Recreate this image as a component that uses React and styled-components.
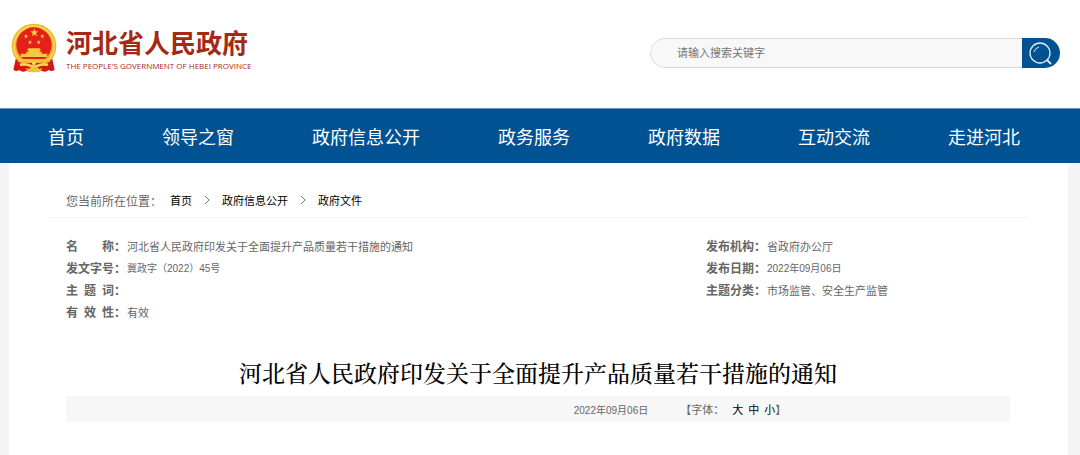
import React, { useState } from "react";
import styled, { createGlobalStyle } from "styled-components";

const NAV_ITEMS = [
  "首页",
  "领导之窗",
  "政府信息公开",
  "政务服务",
  "政府数据",
  "互动交流",
  "走进河北",
];

const CRUMBS = ["首页", "政府信息公开", "政府文件"];

const TITLE = "河北省人民政府印发关于全面提升产品质量若干措施的通知";

const INFO_LEFT = [
  { label: ["名", "称"], value: TITLE },
  { label: ["发", "文", "字", "号"], value: "冀政字（2022）45号", numeric: true },
  { label: ["主", "题", "词"], value: "" },
  { label: ["有", "效", "性"], value: "有效" },
];

const INFO_RIGHT = [
  { label: ["发", "布", "机", "构"], value: "省政府办公厅" },
  { label: ["发", "布", "日", "期"], value: "2022年09月06日", numeric: true },
  { label: ["主", "题", "分", "类"], value: "市场监管、安全生产监管" },
];

const STAR = "M0-10 2.4-3.2 9.5-3.1 3.8 1.2 5.9 8.1 0 4-5.9 8.1-3.8 1.2-9.5-3.1-2.4-3.2Z";

const Emblem = () => (
  <EmblemSvg viewBox="14 18 138 150" aria-hidden="true">
    <circle cx="83" cy="87" r="67" fill="#edb52c" />
    <circle cx="83" cy="87" r="60" fill="none" stroke="#f9d252" strokeWidth="6" />
    <circle cx="83" cy="84" r="53" fill="#e5201b" />
    <path d="M28 126q55 24 110 0l7 32q-8 8-18 1-8 8-20 3H59q-12 5-20-3-10 7-18-1Z" fill="#cf1a16" />
    <g fill="#f6c945">
      <path d={STAR} transform="translate(84 47) scale(1.3)" />
      <path d={STAR} transform="translate(59 58) scale(.7)" />
      <path d={STAR} transform="translate(108 58) scale(.7)" />
      <path d={STAR} transform="translate(71 76) scale(.7)" />
      <path d={STAR} transform="translate(97 76) scale(.7)" />
      <path d="M66 94h34l4 6h-4v4h6v6h17v10H43v-10h17v-6h6v-4h-4Z" />
    </g>
    <path d="M26 118q14 12 28 8h58q14 4 28-8l-10 16q-12 6-22 3H58q-10 3-22-3Z" fill="#f2c03a" />
    <path d="M44 143q18-3 27 3t24 0q9-6 27-3" fill="none" stroke="#f9d458" strokeWidth="8" strokeLinecap="round" />
    <path d="M66 156q17-14 34 0l8-3q-5 13-13 13H71q-8 0-13-13Z" fill="#f2c03a" />
    <circle cx="83" cy="139" r="6" fill="#f9d458" />
  </EmblemSvg>
);

const SearchIcon = () => (
  <svg width="24" height="24" viewBox="0 0 24 24" fill="none" stroke="#e4edf5" aria-hidden="true">
    <circle cx="11" cy="12" r="10" strokeWidth="1.3" />
    <path d="M5 11q1-4 5-5" strokeWidth="1" />
    <path d="m18 19 4 4" strokeWidth="1.8" />
  </svg>
);

const Chevron = () => (
  <svg width="6" height="10" viewBox="0 0 6 10" fill="none" stroke="#777" aria-hidden="true">
    <path d="m1 1 4 4-4 4" />
  </svg>
);

const InfoItem = ({ item }) => (
  <InfoRow>
    <InfoLabel>
      <LabelChars>
        {item.label.map((char) => (
          <span key={char}>{char}</span>
        ))}
      </LabelChars>
      ：
    </InfoLabel>
    <InfoValue $numeric={item.numeric}>{item.value}</InfoValue>
  </InfoRow>
);

const App = () => {
  const [keyword, setKeyword] = useState("");

  const onChangeKeyword = (e) => {
    setKeyword(e.target.value);
  };

  return (
    <>
      <GlobalStyle />
      <Header>
        <Logo href="#">
          <Emblem />
          <LogoText>
            <LogoName>河北省人民政府</LogoName>
            <LogoEnglish>THE PEOPLE'S GOVERNMENT OF HEBEI PROVINCE</LogoEnglish>
          </LogoText>
        </Logo>
        <SearchForm onSubmit={(e) => e.preventDefault()}>
          <SearchInput
            value={keyword}
            onChange={onChangeKeyword}
            type="text"
            aria-label="请输入搜索关键字"
            placeholder="请输入搜索关键字"
          />
          <SearchButton type="submit" aria-label="搜索">
            <SearchIcon />
          </SearchButton>
        </SearchForm>
      </Header>
      <Nav>
        {NAV_ITEMS.map((item) => (
          <NavLink key={item} href="#">
            {item}
          </NavLink>
        ))}
      </Nav>
      <Panel>
        <Breadcrumb>
          <CrumbLabel>您当前所在位置：</CrumbLabel>
          {CRUMBS.map((crumb, index) => (
            <React.Fragment key={crumb}>
              {index > 0 && <Chevron />}
              <CrumbLink href="#">{crumb}</CrumbLink>
            </React.Fragment>
          ))}
        </Breadcrumb>
        <Article>
          <InfoGrid>
            <InfoList>
              {INFO_LEFT.map((item) => (
                <InfoItem key={item.label.join("")} item={item} />
              ))}
            </InfoList>
            <InfoList>
              {INFO_RIGHT.map((item) => (
                <InfoItem key={item.label.join("")} item={item} />
              ))}
            </InfoList>
          </InfoGrid>
          <Title>{TITLE}</Title>
          <MetaBar>
            <MetaDate>2022年09月06日</MetaDate>
            <FontSizes>
              【字体：
              <SizeButtons>
                <SizeButton type="button">大</SizeButton>
                <SizeButton type="button">中</SizeButton>
                <SizeButton type="button">小</SizeButton>
              </SizeButtons>
              】
            </FontSizes>
          </MetaBar>
        </Article>
      </Panel>
    </>
  );
};

export default App;

const GlobalStyle = createGlobalStyle`
  * {
    box-sizing: border-box;
  }
  html, body, #root {
    height: 100%;
  }
  body {
    margin: 0;
    background: #f4f4f4;
    color: #666;
    font-family: "Liberation Sans", "Noto Sans CJK SC", sans-serif;
    font-size: 11px;
  }
  #root {
    display: flex;
    flex-direction: column;
  }
  a {
    color: inherit;
    text-decoration: none;
  }
`;

const Header = styled.header`
  display: flex;
  justify-content: space-between;
  align-items: flex-start;
  height: 108px;
  padding: 22px 20px 0 11px;
  flex-shrink: 0;
  background: #fff;
`;
const Logo = styled.a`
  display: flex;
  align-items: center;
  gap: 9px;
  color: #a52a14;
`;
const EmblemSvg = styled.svg`
  width: 46px;
  height: 50px;
`;
const LogoText = styled.span`
  display: flex;
  flex-direction: column;
  padding-top: 4px;
`;
const LogoName = styled.span`
  font-family: "Noto Sans CJK SC", sans-serif;
  font-size: 26px;
  font-weight: 700;
  line-height: 32px;
`;
const LogoEnglish = styled.span`
  font-family: "Open Sans", sans-serif;
  font-size: 8px;
  font-weight: 500;
  line-height: 16px;
  white-space: nowrap;
`;
const SearchForm = styled.form`
  display: flex;
  flex: 0 1 410px;
  height: 30px;
  margin-top: 16px;
  border-radius: 15px;
  overflow: hidden;
`;
const SearchInput = styled.input`
  flex: 1;
  min-width: 0;
  padding: 0 26px;
  border: 1px solid #d9d9d9;
  border-right: none;
  border-radius: 15px 0 0 15px;
  background: #f8f8f8;
  font: inherit;
  color: #666;
  &::placeholder {
    color: #757575;
  }
`;
const SearchButton = styled.button`
  display: flex;
  justify-content: center;
  align-items: center;
  width: 38px;
  padding: 0;
  border: none;
  background: #005293;
`;
const Nav = styled.nav`
  display: flex;
  justify-content: space-between;
  align-items: center;
  height: 55px;
  padding: 0 60px 0 48px;
  flex-shrink: 0;
  border-top: 1px solid #6697be;
  background: #005293;
`;
const NavLink = styled.a`
  color: #fff;
  font-size: 18px;
  white-space: nowrap;
`;
const Panel = styled.main`
  flex: 1 0 auto;
  margin: 0 12px 0 9px;
  padding: 20px 40px 0 39px;
  background: #fff;
`;
const Breadcrumb = styled.nav`
  display: flex;
  align-items: center;
  gap: 12px;
  height: 35px;
  padding: 0 18px;
  border-bottom: 1px solid #f5f5f5;
`;
const CrumbLabel = styled.span`
  width: 92px;
  font-size: 12px;
  white-space: nowrap;
`;
const CrumbLink = styled.a`
  color: #000;
`;
const Article = styled.article`
  padding: 18px 18px 0;
`;
const InfoGrid = styled.div`
  display: grid;
  grid-template-columns: 1fr 304px;
`;
const InfoList = styled.dl`
  margin: 0;
`;
const InfoRow = styled.div`
  display: flex;
  line-height: 22px;
`;
const InfoLabel = styled.dt`
  display: flex;
  width: 61px;
  font-size: 12px;
  font-weight: 700;
`;
const LabelChars = styled.span`
  display: flex;
  justify-content: space-between;
  width: 48px;
`;
const InfoValue = styled.dd`
  margin: 0;
  font-size: ${(props) => (props.$numeric ? "10px" : "11px")};
`;
const Title = styled.h1`
  margin: 34px 0 8px;
  color: #000;
  font-family: "Noto Serif CJK SC", "Noto Sans CJK SC", serif;
  font-size: 23px;
  font-weight: 500;
  line-height: 30px;
  text-align: center;
`;
const MetaBar = styled.div`
  display: flex;
  justify-content: center;
  align-items: center;
  gap: 32px;
  height: 26px;
  padding-left: 284px;
  background: #f7f7f7;
`;
const MetaDate = styled.time`
  font-size: 10px;
`;
const FontSizes = styled.div`
  display: flex;
  align-items: center;
`;
const SizeButtons = styled.span`
  display: flex;
  gap: 5px;
  padding-left: 8px;
`;
const SizeButton = styled.button`
  padding: 0;
  border: none;
  background: none;
  color: #000;
  font: inherit;
`;
